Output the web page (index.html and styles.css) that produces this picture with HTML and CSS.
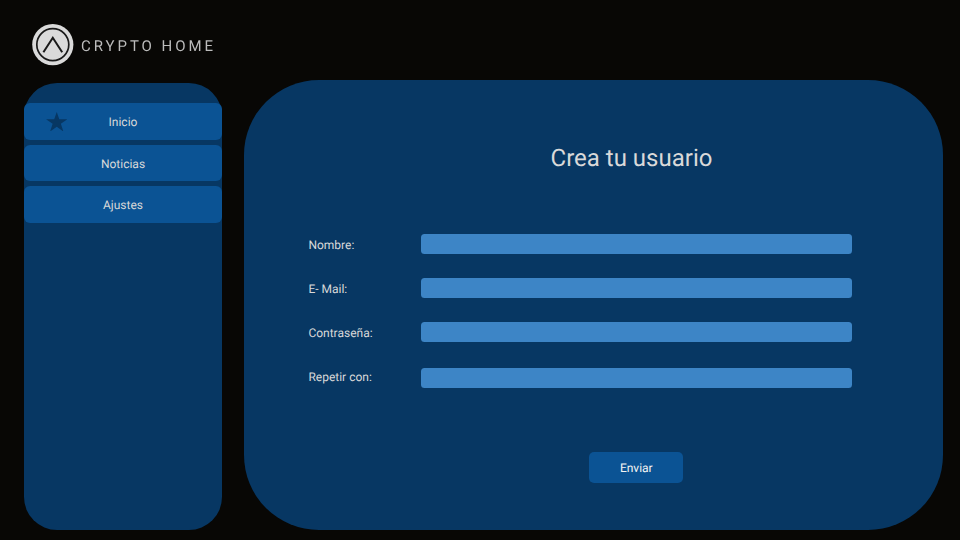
FILE: index.html
```html
<!DOCTYPE html>
<html lang="es">
<head>
<meta charset="utf-8">
<title>Crypto Home</title>
<link rel="stylesheet" href="styles.css">
</head>
<body>
<header class="brand">
  <svg class="brand-logo" viewBox="0 0 42 42" aria-hidden="true">
    <circle cx="20.8" cy="20.6" r="20.6" fill="#dadada"/>
    <circle cx="20.8" cy="20.6" r="16" fill="none" stroke="#191919" stroke-width="1.7"/>
    <path d="M11.4 28.3 20.8 13.8 30.2 28.3" fill="none" stroke="#191919" stroke-width="2"/>
  </svg>
  <span class="brand-name">CRYPTO HOME</span>
</header>
<div class="layout">
  <nav class="sidebar">
    <a class="nav-item">
      <svg class="star" viewBox="0 0 22 20" aria-hidden="true"><path d="M11 0 13.6 7.4H22L15.2 12 17.8 20 11 15.1 4.2 20 6.8 12 0 7.4H8.4Z" fill="#073763"/></svg>
      Inicio
    </a>
    <a class="nav-item">Noticias</a>
    <a class="nav-item">Ajustes</a>
  </nav>
  <main class="panel">
    <h1 class="title">Crea tu usuario</h1>
    <form class="form">
      <div class="row"><label for="nombre">Nombre:</label><input id="nombre" type="text"></div>
      <div class="row"><label for="mail">E- Mail:</label><input id="mail" type="email"></div>
      <div class="row"><label for="clave">Contraseña:</label><input id="clave" type="password"></div>
      <div class="row row-repeat"><label for="repetir">Repetir con:</label><input id="repetir" type="password"></div>
      <button class="submit" type="button">Enviar</button>
    </form>
  </main>
</div>
</body>
</html>
```

FILE: styles.css
```css
* { box-sizing: border-box; }

body {
  margin: 0;
  width: 960px;
  height: 540px;
  overflow: hidden;
  background: #080705;
  color: #d9d9d9;
  font-family: Roboto, sans-serif;
  font-size: 12px;
  text-rendering: geometricPrecision;
}

.brand {
  display: flex;
  align-items: center;
  height: 80px;
  padding: 9px 0 0 32px;
}

.brand-logo { width: 42px; height: 42px; }

.brand-name {
  margin-left: 7px;
  padding-top: 2px;
  font-size: 15px;
  letter-spacing: 2.95px;
  color: #bcbcbc;
  white-space: nowrap;
  filter: blur(0.35px);
}

.layout {
  display: grid;
  grid-template-columns: 198px 699px;
  column-gap: 22px;
  height: 450px;
  padding-left: 24px;
}

.sidebar {
  display: flex;
  flex-direction: column;
  gap: 5px;
  margin-top: 3px;
  padding-top: 20px;
  border-radius: 33px;
  background: #073763;
}

.nav-item {
  position: relative;
  display: flex;
  align-items: center;
  justify-content: center;
  height: 36.5px;
  padding-top: 1.5px;
  border-radius: 6px;
  background: #0b5394;
}

.star {
  position: absolute;
  left: 21.5px;
  top: 8.7px;
  width: 21.5px;
  height: 19.5px;
}

.panel {
  border-radius: 75px;
  background: #073763;
}

.title {
  margin: 63px 0 0 76px;
  text-align: center;
  font-size: 24px;
  line-height: 30px;
  font-weight: 400;
}

.form {
  display: flex;
  flex-direction: column;
  gap: 24px;
  margin: 61px 91px 0 64px;
}

.row {
  display: grid;
  grid-template-columns: 113px 431px;
  height: 20px;
  line-height: 20px;
}

.row label { padding: 1px 0 0 0.4px; }

.row input {
  width: 100%;
  height: 20px;
  padding: 0 6px;
  border: 0;
  border-radius: 3.5px;
  background: #3d85c6;
  font: inherit;
}

.row-repeat input { margin-top: 2px; }

.submit {
  width: 94px;
  height: 31px;
  margin: 42px 0 0 281px;
  padding: 0 0 0 0.6px;
  border: 0;
  border-radius: 5px;
  background: #0b5394;
  color: #f3f3f3;
  font: inherit;
  text-rendering: inherit;
}
```
